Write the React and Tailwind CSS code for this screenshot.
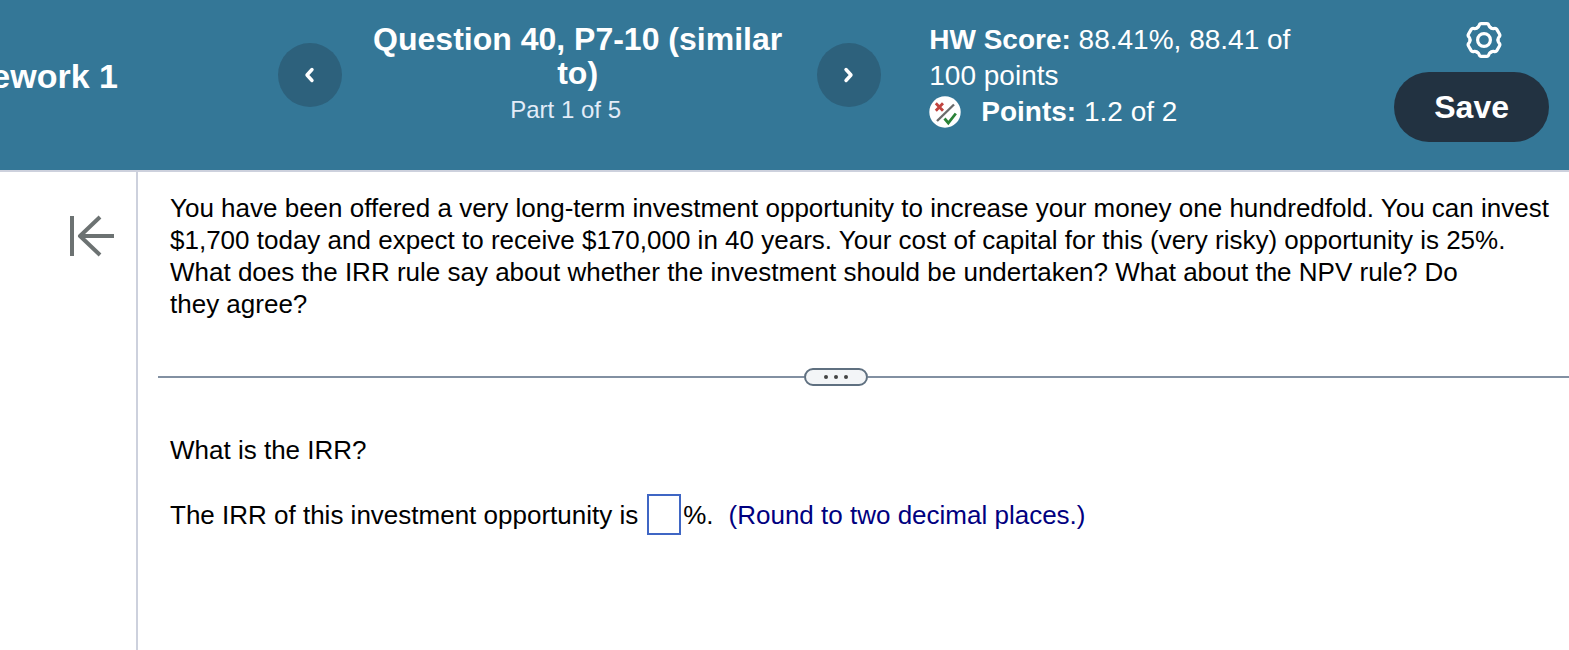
import React, { useState } from 'react';

const GEAR_ANGLES = [0, 60, 120, 180, 240, 300];

const GearIcon = () => (
  <svg viewBox="-20 -20 40 40" className="w-10 h-10" fill="none" stroke="currentColor" strokeWidth="3.2" strokeLinecap="round" strokeLinejoin="round" aria-hidden="true">
    {GEAR_ANGLES.map((angle) => (
      <path
        key={angle}
        transform={`rotate(${angle})`}
        d="M-7 -12.1C-5.9 -12.7 -5.3 -13.2 -5 -14.2C-4.6 -15.8 -4 -16.4 -2.8 -16.4H2.8C4 -16.4 4.6 -15.8 5 -14.2C5.3 -13.2 5.9 -12.7 7 -12.1"
      />
    ))}
    <circle r="6.4" />
  </svg>
);

const PartialCreditIcon = () => (
  <svg viewBox="0 0 32 32" className="w-8 h-8 shrink-0" fill="none" aria-hidden="true">
    <circle cx="16" cy="16" r="15.7" fill="#fff" />
    <path d="M8 25L25 8.5" stroke="#6b6b6b" strokeWidth="2.4" />
    <path d="M6.8 7.2L14 14.8M14 7.2L6.8 14.8" stroke="#c0443f" strokeWidth="2.8" />
    <path d="M15.5 22.5L19.3 27L26.8 17.5" stroke="#2a8237" strokeWidth="2.8" />
  </svg>
);

const CollapseIcon = () => (
  <svg viewBox="0 0 46 44" className="w-[46px] h-11" fill="none" stroke="#6c7272" strokeWidth="4" strokeLinejoin="round" aria-hidden="true">
    <path d="M4 2V42M46 22H12M32 3L12 22L32 41" />
  </svg>
);

const NavButton = ({ label, d }) => (
  <button type="button" aria-label={label} className="w-16 h-16 shrink-0 rounded-full bg-[#2d617c] flex items-center justify-center text-white">
    <svg viewBox="0 0 16 20" className="w-4 h-5" fill="none" stroke="currentColor" strokeWidth="3.4" strokeLinecap="round" strokeLinejoin="round" aria-hidden="true">
      <path d={d} />
    </svg>
  </button>
);

const Header = () => (
  <header className="flex items-start bg-[#347797] text-white pt-5 pb-7 pr-5 border-b-2 border-[#cdd1dd]">
    <div className="w-[118px] shrink-0 mt-8 flex justify-end overflow-hidden">
      <h1 className="text-[34px] leading-12 font-bold whitespace-nowrap">Homework 1</h1>
    </div>

    <nav className="flex-1 ml-40 flex items-start" aria-label="Questions">
      <div className="mt-[23px]">
        <NavButton label="Previous question" d="M10 4.5L5 10L10 15.5" />
      </div>
      <div className="flex-1 pl-6 pr-7 text-center">
        <h2 className="text-[32px] leading-[34px] font-bold mt-[2px]">Question 40, P7-10 (similar to)</h2>
        <p className="text-2xl leading-10 pr-6 text-[#e3ecf8]">Part 1 of 5</p>
      </div>
      <div className="mt-[23px]">
        <NavButton label="Next question" d="M5 4.5L10 10L5 15.5" />
      </div>
    </nav>

    <div className="w-96 shrink-0 mt-[2px] ml-12 mr-[81px] text-[28px] leading-9">
      <p><strong>HW Score:</strong> 88.41%, 88.41 of 100 points</p>
      <div className="flex items-center gap-5">
        <PartialCreditIcon />
        <p><strong>Points:</strong> 1.2 of 2</p>
      </div>
    </div>

    <div className="shrink-0 flex flex-col items-end gap-3">
      <button type="button" aria-label="Settings" className="mr-[45px]">
        <GearIcon />
      </button>
      <button type="button" className="h-[70px] px-10 rounded-full bg-[#223241] text-[32px] font-bold">Save</button>
    </div>
  </header>
);

const App = () => {
  const [irr, setIrr] = useState('');

  return (
    <div className="min-h-screen flex flex-col bg-white font-['Liberation_Sans',Arial,sans-serif]">
      <Header />

      <div className="flex-1 flex">
        <aside className="w-[138px] shrink-0 border-r-2 border-[#cdd1dd] pt-[42px] pl-[68px]">
          <button type="button" aria-label="Collapse panel">
            <CollapseIcon />
          </button>
        </aside>

        <main className="flex-1 pt-5 pl-5 text-[26px] leading-8 text-black">
          <p className="pl-3 pr-4">
            You have been offered a very long-term investment opportunity to increase your money one hundredfold. You can invest $1,700 today and expect to receive $170,000 in 40 years. Your cost of capital for this (very risky) opportunity is 25%. What does the IRR rule say about whether the investment should be undertaken? What about the NPV rule? Do they&nbsp;agree?
          </p>

          <div className="mt-12 flex items-center">
            <div className="flex-1 h-[2px] bg-[#8290a2]"></div>
            <button type="button" aria-label="Resize panels" className="w-16 h-[18px] rounded-full border-2 border-[#5f7080] bg-[#f3f5f7] flex items-center justify-center gap-[6px]">
              <span className="w-1 h-1 rounded-full bg-[#444]"></span>
              <span className="w-1 h-1 rounded-full bg-[#444]"></span>
              <span className="w-1 h-1 rounded-full bg-[#444]"></span>
            </button>
            <div className="flex-1 h-[2px] bg-[#8290a2]"></div>
            <div className="w-14 h-[2px] bg-[#8290a2]"></div>
          </div>

          <p className="mt-12 pl-3">What is the IRR?</p>
          <div className="mt-7 pl-3 flex items-center">
            <label htmlFor="irr">The IRR of this investment opportunity is</label>
            <input
              id="irr"
              type="text"
              value={irr}
              onChange={(e) => setIrr(e.target.value)}
              className="w-[34px] h-[41px] ml-[9px] mr-[2px] border-2 border-[#3f66c4] text-center focus:outline-none"
            />
            <span>%.</span>
            <span className="ml-[15px] text-[#000080]">(Round to two decimal places.)</span>
          </div>
        </main>
      </div>
    </div>
  );
};

export default App;
